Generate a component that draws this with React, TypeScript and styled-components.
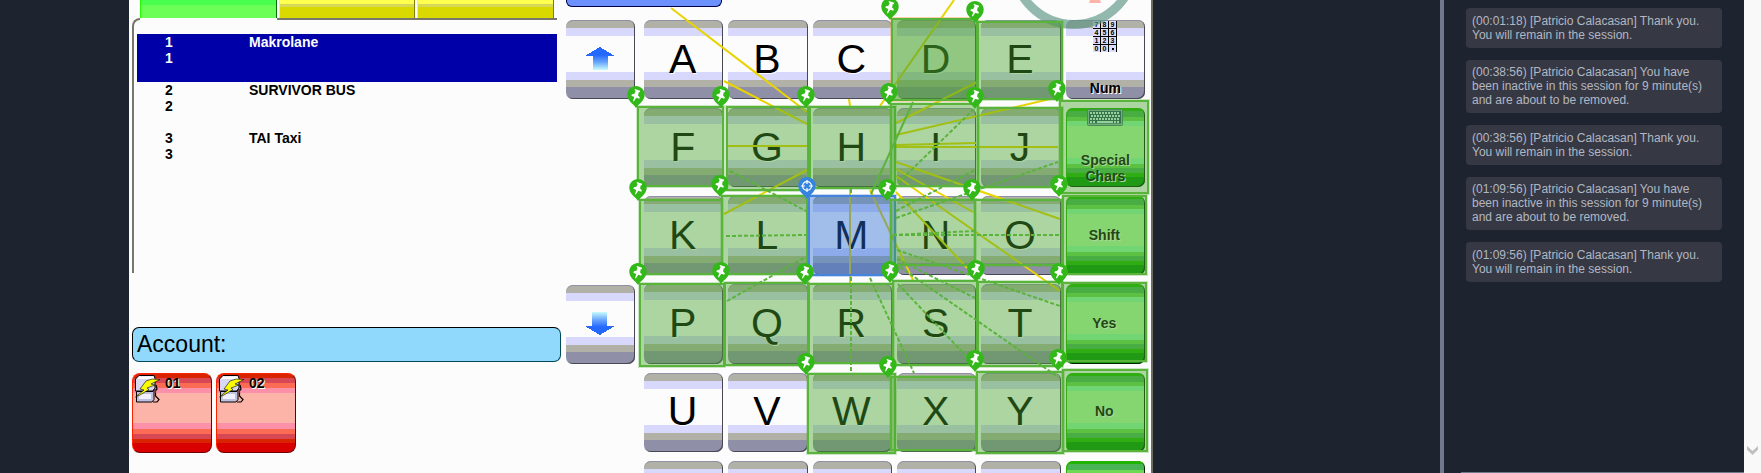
import React from "react";
import styled, { createGlobalStyle, css } from "styled-components";

const GlobalStyle = createGlobalStyle`
  * { box-sizing: border-box; }
  body {
    margin: 0;
    background: #1e2330;
    font-family: "Liberation Sans", Arial, sans-serif;
  }
  button { font-family: inherit; }
`;

/* ---------- shell ---------- */

const Shell = styled.div`
  display: flex;
  height: 100vh;
  overflow: hidden;
`;

const Workspace = styled.main`
  flex: 1;
  min-width: 0;
  padding-left: 129px;
  overflow: hidden;
`;

const Terminal = styled.section`
  position: relative;
  display: flex;
  gap: 5px;
  width: 1024px;
  height: 100%;
  padding: 0 6px 0 3px;
  border-right: 2px solid #6e6e5e;
  background: #fcfcfc;
  overflow: hidden;
`;

/* ---------- accounts pane ---------- */

const AccountPane = styled.div`
  flex: 1;
  min-width: 0;
`;

const Tabs = styled.div`
  position: relative;
  z-index: 1;
  display: flex;
  gap: 2px;
  height: 18px;
  padding: 0 7px 0 8px;
`;

const Tab = styled.button<{ $active?: boolean }>`
  flex: 1;
  padding: 0;
  border: 0;
  border-left: 1px solid #ffff00;
  border-right: 1px solid #808000;
  background: linear-gradient(#ffff50 4px, #d8d858 4px, #d8d858 7px, #d9d900 7px);
  ${(p) =>
    p.$active &&
    css`
      border-left-color: #24ff00;
      border-right-color: #007000;
      background: linear-gradient(#48ff50 5px, #6cff58 5px);
      box-shadow: 0 2px 0 #fcfcfc;
    `}
`;

const ListPanel = styled.div`
  height: 255px;
  margin-right: 4px;
  padding: 14px 0 0 3px;
  border: solid #77776c;
  border-width: 2px 0 0 2px;
  border-top-left-radius: 8px;
`;

const AccountTable = styled.table`
  width: 100%;
  border-collapse: collapse;
  font-size: 14px;
  font-weight: 700;
  line-height: 16px;
`;

const AccountRow = styled.tr<{ $selected?: boolean }>`
  height: 48px;
  vertical-align: top;
  color: ${(p) => (p.$selected ? "#fcfcfc" : "#000")};
  background: ${(p) => (p.$selected ? "#0000a8" : "transparent")};
`;

const NumberCell = styled.td`
  width: 112px;
  padding: 0 0 0 28px;
`;

const NameCell = styled.td`
  padding: 0;
`;

const AccountField = styled.div`
  display: flex;
  align-items: center;
  height: 35px;
  margin: 54px 0 11px;
  padding: 0 4px;
  border: 1px solid #004858;
  border-top-color: #000;
  border-left-color: #000;
  border-radius: 7px;
  background: #90d8fc;
  font-size: 23px;
`;

const AccountInput = styled.input`
  flex: 1;
  min-width: 0;
  height: 100%;
  border: 0;
  outline: 0;
  background: transparent;
  font: inherit;
`;

const PumpRow = styled.div`
  display: flex;
  gap: 4px;
`;

const PumpButton = styled.button`
  display: flex;
  align-items: flex-start;
  gap: 5px;
  width: 80px;
  height: 80px;
  padding: 1px 2px;
  border: 1px solid;
  border-color: #ff2400 #700000 #700000 #ff2400;
  border-radius: 8px;
  background: linear-gradient(
    #d82400 4px, #d84854 4px 9px, #fc6c54 9px 14px, #fc90a8 14px 19px,
    #fcb4a8 19px 49px, #fc90a8 49px 55px, #fc6c54 55px 60px, #d84854 60px 65px,
    #d82400 65px 69px, #d80000 69px
  );
  font-size: 14px;
  font-weight: 700;
  line-height: 16px;
  color: #000;
  text-shadow: 1px 1px 0 #fcfcfc;
`;

/* ---------- keyboard ---------- */

const KeyboardPane = styled.div`
  width: 579px;
  flex: none;
`;

const ModeButton = styled.button`
  display: block;
  width: 156px;
  height: 7px;
  margin-bottom: 13px;
  padding: 0;
  border: 1px solid #000048;
  border-top: 0;
  border-radius: 0 0 6px 6px;
  background: #6c90fc;
`;

const KeyboardRow = styled.div`
  display: flex;
  gap: 9px;
  height: 520px;
`;

const ArrowColumn = styled.div`
  display: grid;
  grid-template-rows: repeat(6, 1fr);
  gap: 9px;
  width: 69px;
`;

const KeyGrid = styled.div`
  flex: 1;
  display: grid;
  grid-template-columns: repeat(6, 1fr);
  grid-template-rows: repeat(6, 1fr);
  gap: 9px 5px;
`;

const greyBands = `linear-gradient(
  #b1b1a8 8px, #d8d8fc 8px 16px, #fcfcfc 16px 52px, #d8d8fc 52px 60px,
  #b1b1a8 60px 67px, #908fa8 67px
)`;
const greenBands = `linear-gradient(
  #1fb400 3px, #48b454 3px 9px, #6cd854 9px 13px, #90fcac 13px 18px,
  #b4fca4 18px 50px, #90fcac 50px 56px, #6cd854 56px 60px, #48b454 60px 65px,
  #1fb400 65px 69px, #009000 69px
)`;

const Key = styled.button<{ $green?: boolean; $row?: number }>`
  display: flex;
  align-items: center;
  justify-content: center;
  min-width: 0;
  padding: 0 2px 2px 0;
  border: 0;
  border-radius: 7px;
  grid-row: ${(p) => p.$row ?? "auto"};
  background: ${(p) => (p.$green ? greenBands : greyBands)};
  box-shadow: ${(p) =>
    p.$green
      ? "inset -1px -1px 0 #002400, inset 1px 1px 0 #24b400"
      : "inset -1px -1px 0 #484854, inset 0 1px 0 #9090a8"};
  color: #000;
  font-size: ${(p) => (p.$green ? 14 : 41)}px;
  font-weight: ${(p) => (p.$green ? 700 : 400)};
  line-height: 16px;
  text-shadow: 1px 1px 0 #fcfcfc;
`;

const IconKey = styled(Key)`
  flex-direction: column;
  justify-content: space-between;
  padding: 1px 0 3px;
  font-size: 14px;
  font-weight: 700;
`;

/* ---------- hotspot layer ---------- */

const Layer = styled.div`
  position: absolute;
  inset: 0;
  pointer-events: none;
`;

const Links = styled.svg`
  position: absolute;
  inset: 0;
  width: 100%;
  height: 100%;
`;

const tones = {
  green: { line: "#5ab43c", fill: "rgba(73, 164, 45, 0.44)", halo: "rgba(90, 180, 60, 0.3)" },
  hover: { line: "#5ab43c", fill: "rgba(73, 164, 45, 0.6)", halo: "rgba(240, 170, 90, 0.5)" },
  blue: { line: "#4484dc", fill: "rgba(42, 108, 212, 0.43)", halo: "rgba(68, 132, 220, 0.3)" },
};
type Tone = keyof typeof tones;

type Box = { l: number; t: number; r: number; b: number; tone?: Tone };

const Hotspot = styled.div<{ $box: Box }>`
  position: absolute;
  left: ${(p) => p.$box.l - 129}px;
  top: ${(p) => p.$box.t}px;
  width: ${(p) => p.$box.r - p.$box.l}px;
  height: ${(p) => p.$box.b - p.$box.t}px;
  border: 2px solid ${(p) => tones[p.$box.tone ?? "green"].line};
  background: ${(p) => tones[p.$box.tone ?? "green"].fill};
  background-clip: padding-box;
  box-shadow: 0 0 0 1px ${(p) => tones[p.$box.tone ?? "green"].halo};
`;

const PinMark = styled.svg<{ $x: number; $y: number }>`
  position: absolute;
  left: ${(p) => p.$x - 129 - 9}px;
  top: ${(p) => p.$y}px;
  width: 18px;
  height: 22px;
`;

const boxes: Box[] = [
  { l: 891, t: 18, r: 978, b: 101, tone: "hover" },
  { l: 977, t: 21, r: 1063, b: 100 },
  { l: 637, t: 106, r: 724, b: 187 },
  { l: 726, t: 106, r: 809, b: 191 },
  { l: 809, t: 106, r: 896, b: 189 },
  { l: 890, t: 103, r: 979, b: 187 },
  { l: 977, t: 107, r: 1063, b: 188 },
  { l: 1059, t: 100, r: 1149, b: 194 },
  { l: 639, t: 199, r: 723, b: 275 },
  { l: 721, t: 195, r: 808, b: 275 },
  { l: 808, t: 195, r: 896, b: 276, tone: "blue" },
  { l: 890, t: 199, r: 976, b: 266 },
  { l: 974, t: 199, r: 1063, b: 266 },
  { l: 1062, t: 195, r: 1147, b: 275 },
  { l: 639, t: 283, r: 725, b: 367 },
  { l: 724, t: 282, r: 809, b: 366 },
  { l: 808, t: 283, r: 894, b: 364 },
  { l: 892, t: 280, r: 978, b: 366 },
  { l: 977, t: 281, r: 1063, b: 367 },
  { l: 1062, t: 282, r: 1147, b: 362 },
  { l: 807, t: 373, r: 896, b: 454 },
  { l: 890, t: 376, r: 977, b: 451 },
  { l: 976, t: 371, r: 1064, b: 454 },
  { l: 1062, t: 369, r: 1148, b: 452 },
];

const pins: [number, number, boolean?][] = [
  [890, -2], [975, 1],
  [636, 86], [721, 86], [806, 86], [889, 83], [975, 87], [1057, 80],
  [638, 179], [720, 175], [807, 177, true], [887, 179], [972, 179], [1059, 175],
  [638, 263], [721, 262], [805, 263], [890, 261], [976, 260], [1059, 263],
  [806, 353], [888, 356], [975, 350], [1058, 349],
];

type Segment = [number, number, number, number];

const yellowLinks: Segment[] = [
  [671, 8, 807, 112], [724, 81, 807, 124], [728, 146, 807, 146], [724, 214, 807, 170],
  [849, 99, 850, 106], [850, 189, 850, 283], [954, 0, 880, 106], [896, 123, 977, 82],
  [896, 135, 1050, 99], [896, 145, 976, 143], [896, 147, 1058, 147], [896, 162, 1060, 219],
  [896, 169, 973, 212], [896, 176, 1060, 291], [896, 192, 967, 268], [870, 190, 913, 280],
];

const dashedLinks: Segment[] = [
  [730, 171, 806, 211], [726, 236, 807, 235], [727, 301, 804, 258], [898, 183, 975, 108],
  [896, 211, 975, 170], [896, 218, 1058, 162], [893, 235, 974, 231], [893, 235, 1060, 235],
  [897, 250, 1060, 306], [897, 259, 975, 298], [900, 267, 1058, 377], [898, 284, 967, 357],
  [870, 278, 914, 373], [851, 277, 851, 371], [851, 189, 851, 195],
];

function Segments({ items, color, dash }: { items: Segment[]; color: string; dash?: string }) {
  return (
    <g transform="translate(-129 0)" stroke={color} strokeWidth="2" strokeDasharray={dash}>
      {items.map(([x1, y1, x2, y2], i) => (
        <line key={i} x1={x1} y1={y1} x2={x2} y2={y2} />
      ))}
    </g>
  );
}

function Pin({ x, y, target }: { x: number; y: number; target?: boolean }) {
  return (
    <PinMark $x={x} $y={y} viewBox="0 0 18 22">
      <path
        d="M9 0C4.200 0 .3 3.800.3 8.500c0 3 1.400 5.500 3.400 7.700C5.800 18.300 7.600 19.800 9 22c1.400-2.200 3.200-3.700 5.300-5.800 2-2.200 3.400-4.700 3.400-7.700C17.700 3.800 13.800 0 9 0z"
        fill={target ? "#3484e0" : "#32b818"}
      />
      {target ? (
        <g fill="none" stroke="#fff" strokeWidth="1.200">
          <circle cx="9" cy="9" r="4.400" />
          <path d="M9 3v4M9 11v4M3 9h4M11 9h4" />
        </g>
      ) : (
        <path
          d="M8 3l5.200 1.800-.5 1.500-1 0-.6 3.200 1.700 1.800-.5 1.400-3-.9-2.500 3.600-.8-.3 1.300-4.200-2.900-1.200.5-1.500 2.500-.5 1.300-2.800-1.100-.8z"
          fill="#fff"
        />
      )}
    </PinMark>
  );
}

function ArrowIcon({ down }: { down?: boolean }) {
  const id = down ? "stemDown" : "stemUp";
  return (
    <svg width="30" height="23" viewBox="0 0 30 23" shapeRendering="crispEdges">
      <defs>
        <linearGradient id={id} x1="0" y1="0" x2="0" y2="1">
          <stop offset="0" stopColor="#2468fc" />
          <stop offset=".5" stopColor="#6ca8fc" />
          <stop offset="1" stopColor="#c8fcfc" />
        </linearGradient>
      </defs>
      <g transform={down ? "rotate(180 15 11.5)" : undefined}>
        <path d="M15 0L30 9H0z" fill="#2468fc" />
        <rect x="8" y="8" width="15" height="15" fill={`url(#${id})`} />
      </g>
    </svg>
  );
}

function PumpIcon() {
  return (
    <svg width="25" height="28" viewBox="0 0 25 28">
      <path d="M.5 4L4 .5h15l1 3V13l-2 3H.5z" fill="#d8d8f4" stroke="#000" />
      <path d="M4 1.500h14.500l1 2.500H2z" fill="#fff" />
      <path d="M1.500 16.500H18l1-2v10l-2 2.500H1.500z" fill="#c0c0e0" stroke="#000" />
      <path d="M4 19h12v5H4z" fill="#f0f0ff" />
      <path d="M21 10l1 4-1.500 2 0 5 3.500 3.500-2 2.500h-4" fill="none" stroke="#000" strokeWidth="1.200" />
      <path d="M20.500 14v4" stroke="#d80000" />
      <path
        d="M25 4.500l-8-.5-6 2-6 8 4 1-8.500 7 4.500-2 9-5.500-2-1.500 8-3-4-1z"
        fill="#fcfc00"
        stroke="#000"
        strokeWidth=".6"
      />
    </svg>
  );
}

function KeypadIcon() {
  const rows = ["789", "456", "123", "00."];
  return (
    <svg width="24" height="31" viewBox="0 0 24 31">
      <rect width="24" height="31" fill="#000" />
      {rows.map((row, r) =>
        row.split("").map((ch, c) => (
          <g key={`${r}${c}`}>
            <rect x={c * 8} y={r * 8} width="7" height="7" fill="#dcdcfc" />
            {ch === "." ? (
              <rect x={c * 8 + 3} y={r * 8 + 3} width="2" height="2" />
            ) : (
              <text
                x={c * 8 + 3.5}
                y={r * 8 + 6}
                fontSize="7"
                fontWeight="700"
                textAnchor="middle"
                style={{ textShadow: "none" }}
              >
                {ch}
              </text>
            )}
          </g>
        ))
      )}
    </svg>
  );
}

function KeyboardIcon() {
  return (
    <svg width="36" height="17" viewBox="0 0 36 17">
      <rect x=".5" y=".5" width="35" height="16" rx="1" fill="#90b4b4" stroke="#487878" />
      <rect x="2" y="2" width="32" height="12.500" fill="#205060" />
      <g stroke="#d8f0f0" strokeWidth="2" strokeDasharray="2 1">
        <path d="M3 4h30M4 7h29M3 10h30" />
        <path d="M3 13h6M27 13h6" />
      </g>
      <path d="M10 13h16" stroke="#d8f0f0" strokeWidth="2" />
    </svg>
  );
}

/* ---------- chat ---------- */

const ChatPane = styled.aside`
  display: flex;
  flex: none;
  width: 321px;
  border-left: 4px solid #6f788c;
  background: #1e2330;
`;

const ChatColumn = styled.div`
  flex: 1;
  min-width: 0;
  display: flex;
  flex-direction: column;
`;

const Messages = styled.div`
  flex: 1;
  display: flex;
  flex-direction: column;
  gap: 12px;
  padding: 8px 22px;
`;

const Message = styled.p`
  display: flex;
  flex-direction: column;
  justify-content: flex-end;
  min-height: 40px;
  margin: 0;
  padding: 5px 6px 6px;
  border-radius: 4px;
  background: #363944;
  color: #b2b7c2;
  font-size: 12px;
  line-height: 14px;
`;

const Composer = styled.div`
  margin-left: 17px;
  border-top: 1px solid #6f788c;
`;

const ScrollTrack = styled.div`
  display: flex;
  flex-direction: column;
  justify-content: flex-end;
  align-items: center;
  width: 17px;
  padding-bottom: 18px;
  background: #f9f9f9;
`;

const ScrollButton = styled.button`
  display: flex;
  padding: 0;
  border: 0;
  background: transparent;
`;

const thanks = "[Patricio Calacasan] Thank you. You will remain in the session.";
const warning =
  "[Patricio Calacasan] You have been inactive in this session for 9 minute(s) and are about to be removed.";

const messages = [
  `(00:01:18) ${thanks}`,
  `(00:38:56) ${warning}`,
  `(00:38:56) ${thanks}`,
  `(01:09:56) ${warning}`,
  `(01:09:56) ${thanks}`,
];

const accounts = [
  { no: 1, name: "Makrolane" },
  { no: 2, name: "SURVIVOR BUS" },
  { no: 3, name: "TAI Taxi" },
];

function Letters({ text }: { text: string }) {
  return (
    <>
      {text.split("").map((ch) => (
        <Key key={ch}>{ch}</Key>
      ))}
    </>
  );
}

export default function App() {
  return (
    <Shell>
      <GlobalStyle />
      <Workspace>
        <Terminal>
          <AccountPane>
            <Tabs>
              <Tab $active aria-label="Tab 1" />
              <Tab aria-label="Tab 2" />
              <Tab aria-label="Tab 3" />
            </Tabs>
            <ListPanel>
              <AccountTable>
                <tbody>
                  {accounts.map((a, i) => (
                    <AccountRow key={a.no} $selected={i === 0}>
                      <NumberCell>
                        {a.no}
                        <br />
                        {a.no}
                      </NumberCell>
                      <NameCell>{a.name}</NameCell>
                    </AccountRow>
                  ))}
                </tbody>
              </AccountTable>
            </ListPanel>
            <AccountField>
              <label htmlFor="account">Account:</label>
              <AccountInput id="account" />
            </AccountField>
            <PumpRow>
              {["01", "02"].map((n) => (
                <PumpButton key={n}>
                  <PumpIcon />
                  {n}
                </PumpButton>
              ))}
            </PumpRow>
          </AccountPane>

          <KeyboardPane>
            <ModeButton aria-label="Mode" />
            <KeyboardRow>
              <ArrowColumn>
                <Key $row={1} aria-label="Up">
                  <ArrowIcon />
                </Key>
                <Key $row={4} aria-label="Down">
                  <ArrowIcon down />
                </Key>
              </ArrowColumn>
              <KeyGrid>
                <Letters text="ABCDE" />
                <IconKey>
                  <KeypadIcon />
                  Num
                </IconKey>
                <Letters text="FGHIJ" />
                <IconKey $green>
                  <KeyboardIcon />
                  <span>
                    Special
                    <br />
                    Chars
                  </span>
                </IconKey>
                <Letters text="KLMNO" />
                <Key $green>Shift</Key>
                <Letters text="PQRST" />
                <Key $green>Yes</Key>
                <Letters text="UVWXY" />
                <Key $green>No</Key>
                <Key />
                <Key />
                <Key />
                <Key />
                <Key />
                <Key $green />
              </KeyGrid>
            </KeyboardRow>
          </KeyboardPane>

          <Layer>
            <Links>
              <g transform="translate(-129 0)">
                <circle cx="1074" cy="-36" r="60.5" fill="none" stroke="#5c9484" strokeWidth="9" opacity=".66" />
                <path d="M1090 0h10l1 3h-12z" fill="#fcb4a8" />
              </g>
              <Segments items={yellowLinks} color="#e8d400" />
            </Links>
            {boxes.map((b, i) => (
              <Hotspot key={i} $box={b} />
            ))}
            <Links>
              <Segments items={[[913, 102, 871, 194]]} color="#5ab43c" />
              <Segments items={dashedLinks} color="#5ab43c" dash="4 2" />
            </Links>
            {pins.map(([x, y, target], i) => (
              <Pin key={i} x={x} y={y} target={target} />
            ))}
          </Layer>
        </Terminal>
      </Workspace>

      <ChatPane>
        <ChatColumn>
          <Messages>
            {messages.map((m) => (
              <Message key={m}>{m}</Message>
            ))}
          </Messages>
          <Composer />
        </ChatColumn>
        <ScrollTrack>
          <ScrollButton aria-label="Scroll down">
            <svg width="11" height="9" viewBox="0 0 11 9">
              <path d="M0 0l5.500 5L11 0v3.800L5.500 9 0 3.800z" fill="#bfbfbf" />
            </svg>
          </ScrollButton>
        </ScrollTrack>
      </ChatPane>
    </Shell>
  );
}
